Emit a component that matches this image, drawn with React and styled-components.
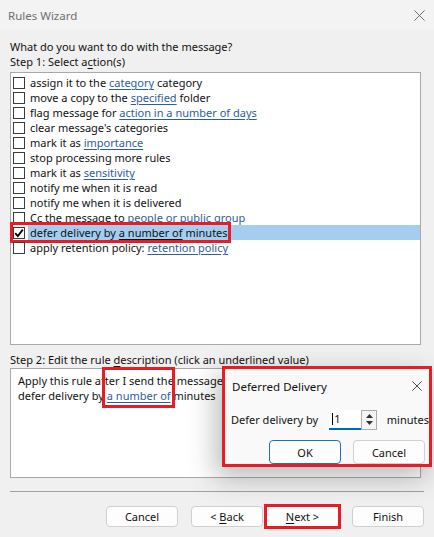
import styled, { createGlobalStyle } from 'styled-components';

const GlobalStyle = createGlobalStyle`
  html, body {
    margin: 0;
    padding: 0;
    background: #f0f0f0;
  }
  * {
    box-sizing: border-box;
  }
`;

const Window = styled.div`
  position: relative;
  width: 434px;
  height: 537px;
  background: #f0f0f0;
  font-family: "Noto Sans", "Open Sans", sans-serif;
  font-size: 11px;
  color: #111;
  overflow: hidden;
  display: flex;
  flex-direction: column;
`;

const TitleBar = styled.div`
  height: 30px;
  display: flex;
  align-items: center;
  justify-content: space-between;
  padding: 0 8px 0 8px;
  background: #f3f3f3;
  color: #6f6f6f;
  font-size: 11.5px;
`;

const CloseIcon = ({ size = 14, color = '#555' }) => (
  <svg width={size} height={size} viewBox="0 0 14 14">
    <path d="M1.5 1.5 L12.5 12.5 M12.5 1.5 L1.5 12.5" stroke={color} strokeWidth="1" fill="none" />
  </svg>
);

const Body = styled.div`
  display: flex;
  flex-direction: column;
  padding: 9px 14px 0 10px;
`;

const Label = styled.div`
  height: 15px;
  line-height: 15px;
  white-space: nowrap;
  margin-top: ${(p) => p.$top || 0}px;
`;

const Key = styled.span`
  text-decoration: underline;
  text-underline-offset: 2px;
`;

const ListBox = styled.div`
  margin-top: 3px;
  width: 411px;
  height: 273px;
  border: 1px solid #a9a9a9;
  background: #fff;
  padding: 2px 0 0 2px;
  display: flex;
  flex-direction: column;
`;

const Row = styled.div`
  height: 15px;
  display: flex;
  align-items: center;
  position: relative;
`;

const Check = styled.span`
  width: 12px;
  height: 12px;
  border: 1px solid #3c3c3c;
  background: #fff;
  flex: none;
  display: flex;
  align-items: center;
  justify-content: center;
`;

const RowText = styled.span`
  flex: 1;
  height: 15px;
  line-height: 15px;
  margin-left: 3px;
  padding-left: 2px;
  white-space: nowrap;
  background: ${(p) => (p.$selected ? '#a4cdf0' : 'transparent')};
`;

const Mark = styled.span`
  position: absolute;
  left: -3px;
  top: -3px;
  width: 221px;
  height: 21px;
  border: 3px solid #e81c24;
  pointer-events: none;
`;

const Link = styled.span`
  color: ${(p) => (p.$dark ? '#111' : '#2e5d9c')};
  text-decoration: ${(p) => (p.$plain ? 'none' : 'underline')};
  text-underline-offset: 2px;
  position: relative;
`;

const LinkMark = styled.span`
  position: absolute;
  left: -5px;
  right: -4px;
  top: -21px;
  bottom: -5px;
  border: 3px solid #e81c24;
`;

const DescBox = styled.div`
  margin-top: 1px;
  width: 411px;
  height: 110px;
  border: 1px solid #a9a9a9;
  background: #fff;
  padding: 4px 0 0 7px;
`;

const Separator = styled.div`
  margin: 13px -4px 0 0;
  height: 1px;
  background: #a0a0a0;
`;

const Footer = styled.div`
  display: flex;
  justify-content: flex-end;
  align-items: center;
  padding: 12px 10px 0 0;
`;

const Button = styled.button`
  width: 72px;
  height: 21px;
  margin-left: ${(p) => p.$gap || 0}px;
  font: inherit;
  color: #111;
  background: #fdfdfd;
  border: 1px solid ${(p) => (p.$primary ? '#1f6fc5' : '#d0d0d0')};
  border-radius: 4px;
  padding: 0;
`;

// red frame drawn around the highlighted footer button
const Frame = styled.span`
  display: flex;
  margin-left: ${(p) => p.$gap || 0}px;
  border: 3px solid #e81c24;
  background: #fdfdfd;

  & > button {
    width: 71px;
    height: 19px;
    border: none;
    border-radius: 0;
  }
`;

const Dialog = styled.div`
  position: absolute;
  left: 222px;
  top: 366px;
  width: 210px;
  height: 101px;
  border: 3px solid #e81c24;
  background: #f9f9f9;
  box-shadow: -6px 10px 26px rgba(0, 0, 0, 0.28);
  display: flex;
  flex-direction: column;
`;

const DialogTitle = styled.div`
  height: 34px;
  display: flex;
  align-items: center;
  justify-content: space-between;
  padding: 0 6px 0 7px;
  font-size: 11.5px;
`;

const DialogRow = styled.div`
  display: flex;
  align-items: center;
  height: 21px;
  padding-left: 6px;
  margin-top: 6px;
  white-space: nowrap;
`;

const Field = styled.div`
  margin-left: 11px;
  width: 35px;
  height: 20px;
  background: #fff;
  border-bottom: 2px solid #0067c0;
  display: flex;
  align-items: center;
  padding-left: 3px;
`;

const Caret = styled.span`
  display: inline-block;
  width: 1px;
  height: 12px;
  background: #000;
  margin-right: 1px;
`;

const Spinner = styled.div`
  width: 17px;
  height: 20px;
  border: 1px solid #adadad;
  background: #f5f5f5;
  display: flex;
  flex-direction: column;
  align-items: center;
  justify-content: space-around;
  padding: 2px 0;
`;

const Unit = styled.span`
  margin-left: 10px;
`;

const DialogButtons = styled.div`
  display: flex;
  padding: 10px 0 0 44px;
  gap: 12px;
`;

const DialogButton = styled(Button)`
  height: 24px;
`;

const actions = [
  ['assign it to the ', 'category', ' category'],
  ['move a copy to the ', 'specified', ' folder'],
  ['flag message for ', 'action in a number of days', ''],
  ["clear message's categories"],
  ['mark it as ', 'importance', ''],
  ['stop processing more rules'],
  ['mark it as ', 'sensitivity', ''],
  ['notify me when it is read'],
  ['notify me when it is delivered'],
  ['Cc the message to ', 'people or public group', '', 'plain'],
  ['defer delivery by ', 'a number of', ' minutes', 'selected'],
  ['apply retention policy: ', 'retention policy', ''],
];

const Tick = () => (
  <svg width="10" height="10" viewBox="0 0 10 10">
    <path d="M1.2 5.2 L3.8 8 L8.8 1.6" stroke="#000" strokeWidth="1.8" fill="none" />
  </svg>
);

const Triangle = ({ up }) => (
  <svg width="7" height="4" viewBox="0 0 7 4">
    <path d={up ? 'M0 4 L3.5 0 L7 4 Z' : 'M0 0 L3.5 4 L7 0 Z'} fill="#333" />
  </svg>
);

export default function App() {
  return (
    <>
      <GlobalStyle />
      <Window>
        <TitleBar>
          <span>Rules Wizard</span>
          <CloseIcon size={13} color="#666" />
        </TitleBar>
        <Body>
          <Label>What do you want to do with the message?</Label>
          <Label>
            Step 1: Select a<Key>c</Key>tion(s)
          </Label>
          <ListBox>
            {actions.map(([before, link, after, kind]) => {
              const selected = kind === 'selected';
              return (
                <Row key={before + (link || '')}>
                  <Check>{selected && <Tick />}</Check>
                  <RowText $selected={selected}>
                    {before}
                    {link && (
                      <Link $dark={selected} $plain={kind === 'plain'}>
                        {link}
                      </Link>
                    )}
                    {after}
                  </RowText>
                  {selected && <Mark />}
                </Row>
              );
            })}
          </ListBox>
          <Label $top={7}>
            Step 2: Edit the rule <Key>d</Key>escription (click an underlined value)
          </Label>
          <DescBox>
            <Label>Apply this rule after I send the message</Label>
            <Label>
              defer delivery by{' '}
              <Link>
                a number of
                <LinkMark />
              </Link>{' '}
              minutes
            </Label>
          </DescBox>
          <Separator />
        </Body>
        <Footer>
          <Button>Cancel</Button>
          <Button $gap={13}>
            &lt; <Key>B</Key>ack
          </Button>
          <Frame $gap={1}>
            <Button>
              <Key>N</Key>ext &gt;
            </Button>
          </Frame>
          <Button $gap={11}>Finish</Button>
        </Footer>

        <Dialog>
          <DialogTitle>
            <span>Deferred Delivery</span>
            <CloseIcon size={12} color="#333" />
          </DialogTitle>
          <DialogRow>
            <span>Defer delivery by</span>
            <Field>
              <Caret />1
            </Field>
            <Spinner>
              <Triangle up />
              <Triangle />
            </Spinner>
            <Unit>minutes</Unit>
          </DialogRow>
          <DialogButtons>
            <DialogButton $primary>OK</DialogButton>
            <DialogButton>Cancel</DialogButton>
          </DialogButtons>
        </Dialog>
      </Window>
    </>
  );
}
